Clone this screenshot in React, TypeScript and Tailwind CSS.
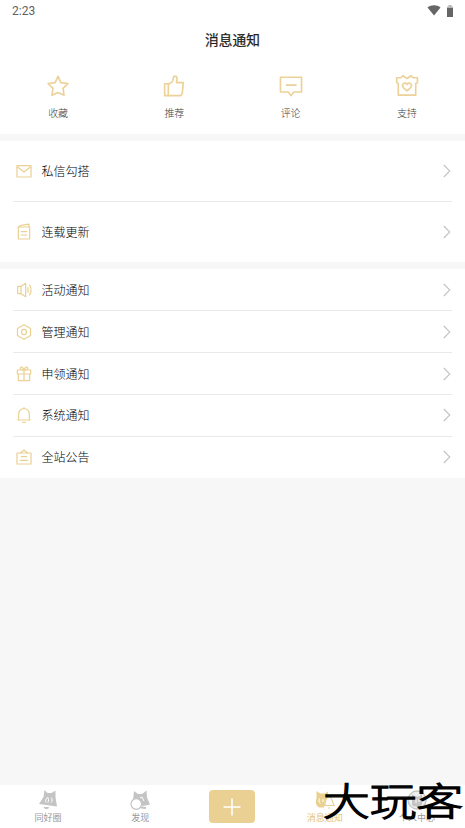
import type { ReactNode } from 'react';

type Item = { label: string; icon: ReactNode };

function Glyph({ children, size = 'size-4' }: { children: ReactNode; size?: string }) {
  return (
    <svg viewBox="0 0 24 24" className={`${size} shrink-0 overflow-visible`} fill="none" stroke="currentColor" strokeWidth="1.8" strokeLinejoin="round" strokeLinecap="round">
      {children}
    </svg>
  );
}

const shortcuts: Item[] = [
  { label: '收藏', icon: <path d="M12 1.500 15.100 8.300 22.800 9.300 17.500 14.600 18.600 22 12 19 5.400 22 6.500 14.600 1.200 9.300 8.900 8.300Z" /> },
  {
    label: '推荐',
    icon: (
      <>
        <path d="M1.800 9.500h4.900L10.200 7.500 11.800 1.500h2.700c1 .5 1 1.500.8 3L14.800 8.300h7.400L21 20l-1.500 2.500H1.800Z" />
        <path d="M5.800 9.500v13" />
      </>
    ),
  },
  {
    label: '评论',
    icon: (
      <>
        <path d="M.5 2.500h23v16H15L12 22.500 9 18.500H.5Z" />
        <path d="M7 11h10.500" />
      </>
    ),
  },
  {
    label: '支持',
    icon: (
      <>
        <path d="M2.500 22V9.500L.8 8.300V3h4.500L7.500.8 12 3.800 16.500.8 18.700 3h4.700v5.300L21.500 9.500V22Z" />
        <path d="M12 17.300 8 13.700c-3-3.600 2-6.700 4-3.400 2-3.300 7-.2 4 3.400Z" />
      </>
    ),
  },
];

const messages: Item[] = [
  {
    label: '私信勾搭',
    icon: (
      <>
        <path d="M1.500 4h21v17h-21Z" />
        <path d="m2 5.500 10 8 10-8" />
      </>
    ),
  },
  {
    label: '连载更新',
    icon: (
      <>
        <path d="M3.500 4.500h17v18h-17ZM3.500 4.500l4-2.500 12-1.800v4.300" />
        <path d="M8 11.500h8M8 16.500h8" />
      </>
    ),
  },
];

const notices: Item[] = [
  {
    label: '活动通知',
    icon: (
      <>
        <path d="M2.500 6.500h5v11h-5ZM7.500 6.500l7-4.500v20l-7-4.500" />
        <path d="M18 8.500v7M20.500 4.500c2.500 4.500 2.500 10.500 0 15" />
      </>
    ),
  },
  {
    label: '管理通知',
    icon: (
      <>
        <path d="m12 1.200 9.800 5.500v10.600L12 22.800l-9.800-5.500V6.700Z" />
        <circle cx="12" cy="12" r="3.800" />
      </>
    ),
  },
  {
    label: '申领通知',
    icon: (
      <>
        <path d="M2 6h20v6H2ZM3.500 12h17v10h-17ZM12 6v16" />
        <path d="M12 6C8 6 5.500 4.500 6.500 2.500S11 2 12 6c1-4 4.500-5.500 5.500-3.500S16 6 12 6" />
      </>
    ),
  },
  {
    label: '系统通知',
    icon: (
      <>
        <path d="M2.500 19.500h19M4 19.500V11c0-11.500 16-11.500 16 0v8.500M10 23h4M12 2V.8" />
      </>
    ),
  },
  {
    label: '全站公告',
    icon: (
      <>
        <path d="M1.500 6h21v16.500h-21ZM6.500 6 12 1.500 17.500 6" />
        <path d="M8 11.500h8M6.500 17h11" />
      </>
    ),
  },
];

function Row({ item, height, last }: { item: Item; height: string; last: boolean }) {
  return (
    <div className={`${height} px-[13px]`}>
      <div className={`flex h-full items-center border-b pl-[3px] ${last ? 'border-transparent' : 'border-[#e9e9e9]'}`}>
        <span className="text-[#ead193]"><Glyph>{item.icon}</Glyph></span>
        <span className="ml-[9.500px] flex-1 text-[12px] leading-4 font-light text-black">{item.label}</span>
        <svg viewBox="0 0 8 14" className="mr-px h-[14px] w-2" fill="none" stroke="#c3c3c3" strokeWidth="1.1">
          <path d="m.8 1 6 6-6 6" />
        </svg>
      </div>
    </div>
  );
}

function Fox() {
  return (
    <svg viewBox="0 0 18 20" className="h-5 w-[18px]">
      <path d="M5.500 0 8.500 3h4L16.500.5V7l1.500 9.500L0 14 4.500 7Z" fill="#c4c4c4" />
      <path d="M7 12.500c-1-3 .5-4.500 2-5 1 1 .5 3.500 0 5m3 0c1.500-1.500 1.500-3.500 0-5" fill="none" stroke="#fff" strokeWidth="1" />
      <path d="M4.500 17h5.500c-.5 3-4 3-5.500 0Z" fill="#c4c4c4" />
    </svg>
  );
}

function Finder() {
  return (
    <svg viewBox="0 0 20 20" className="size-5">
      <path d="M4 1 8 4h4l4.500-3.500.5 7 3 7-7 1.500L3 10Z" fill="#c4c4c4" />
      <path d="m10 8 2-1 2 4" fill="none" stroke="#fff" />
      <circle cx="6.300" cy="14" r="5.300" fill="#fff" stroke="#c4c4c4" strokeWidth="1.200" />
      <path d="m11 17.500 5 .5" stroke="#c4c4c4" strokeWidth="2" />
    </svg>
  );
}

function Notify() {
  return (
    <svg viewBox="0 0 20 20" className="size-5">
      <path d="M1.500 1 5.500 3.500h4L13 1.500V7C9.500 9 10 13 9 17.500H4C0 15 .5 11 1.500 8Z" fill="#ead193" />
      <path d="M4.500 8.500c-1 2-.5 4 1 5M8 9v3" fill="none" stroke="#fff" />
      <path d="M9 15.500c2.500-2 .5-8.500 5-8.500s2.500 6.500 5.300 8.500ZM13 18h2" fill="#fff" stroke="#ead193" strokeWidth="1.200" />
    </svg>
  );
}

function Profile() {
  return (
    <svg viewBox="0 0 20 20" className="size-5">
      <circle cx="10" cy="10" r="9" fill="#eee" stroke="#c4c4c4" strokeWidth="1.300" />
      <path d="m5 4 3 2.500h4L15 4v11c-2 2-8 2-10 0Z" fill="#c4c4c4" />
      <path d="M9 9v4M12 9v3" stroke="#fff" />
    </svg>
  );
}

function Tab({ icon, label, active = false }: { icon: ReactNode; label: string; active?: boolean }) {
  return (
    <div className="flex flex-1 flex-col items-center pt-[5px]">
      {icon}
      <span className={`mt-[1.500px] text-[9px] leading-3 ${active ? 'text-[#e3c47c]' : 'text-[#999999]'}`}>{label}</span>
    </div>
  );
}

export default function App() {
  return (
    <div className="relative flex h-[828px] w-full flex-col overflow-hidden bg-[#f7f7f7] font-['Noto_Sans_CJK_SC',sans-serif]">
      <header className="h-[134px] shrink-0 bg-white">
        <div className="flex h-[22px] items-center pr-3 pl-3">
          <span className="flex-1 font-[Roboto,sans-serif] text-[12px] leading-4 text-[#5f5f5f]">2:23</span>
          <svg viewBox="0 0 14 11" className="mr-px mb-[2px] h-[11px] w-[14px]">
            <path d="M.5 2.500C4-.5 10-.5 13.500 2.500L7 10.500Z" fill="#666" />
          </svg>
          <svg viewBox="0 0 6 12" className="mb-px ml-[5px] h-3 w-[6px]">
            <path d="M1.500 0h3v1.500H6v2H0v-2h1.500Z" fill="#b8b8b8" />
            <path d="M0 3h6v9H0Z" fill="#666" />
          </svg>
        </div>
        <h1 className="mt-[7px] text-center text-[13.7px] leading-5 font-normal text-[#222] [-webkit-text-stroke:0.25px_#222]">消息通知</h1>
        <nav className="mt-[26px] flex">
          {shortcuts.map((item) => (
            <div key={item.label} className="flex flex-1 flex-col items-center">
              <span className="text-[#ecd198]"><Glyph size="size-[22px]">{item.icon}</Glyph></span>
              <span className="mt-[9px] text-[10px] leading-[14px] font-light text-[#404040]">{item.label}</span>
            </div>
          ))}
        </nav>
      </header>

      <section className="mt-[7px] bg-white">
        {messages.map((item, i) => (
          <Row key={item.label} item={item} height={i === 0 ? 'h-[61px]' : 'h-[60px]'} last={i === messages.length - 1} />
        ))}
      </section>

      <section className="mt-[7px] h-[209px] bg-white pt-[0.6px]">
        {notices.map((item, i) => (
          <Row key={item.label} item={item} height="h-[41.8px]" last={i === notices.length - 1} />
        ))}
      </section>

      <footer className="mt-auto flex h-[43px] shrink-0 bg-white px-[2px]">
        <Tab icon={<Fox />} label="同好圈" />
        <Tab icon={<Finder />} label="发现" />
        <div className="flex flex-1 justify-center pt-[5px]">
          <div className="mr-px flex h-[33px] w-[46px] items-center justify-center rounded-[4px] bg-[#ead193]">
            <svg viewBox="0 0 18 18" className="size-[18px]" stroke="#fff" strokeWidth="1.600">
              <path d="M9 .5v17M.5 9h17" />
            </svg>
          </div>
        </div>
        <Tab icon={<Notify />} label="消息通知" active />
        <Tab icon={<Profile />} label="个人中心" />
      </footer>

      <div className="absolute top-[774px] left-[323px] h-[50px] origin-left scale-x-[1.23] text-[38px] leading-[50px] font-light whitespace-nowrap text-black [-webkit-text-stroke:1.3px_black]">
        大玩客
      </div>
    </div>
  );
}
